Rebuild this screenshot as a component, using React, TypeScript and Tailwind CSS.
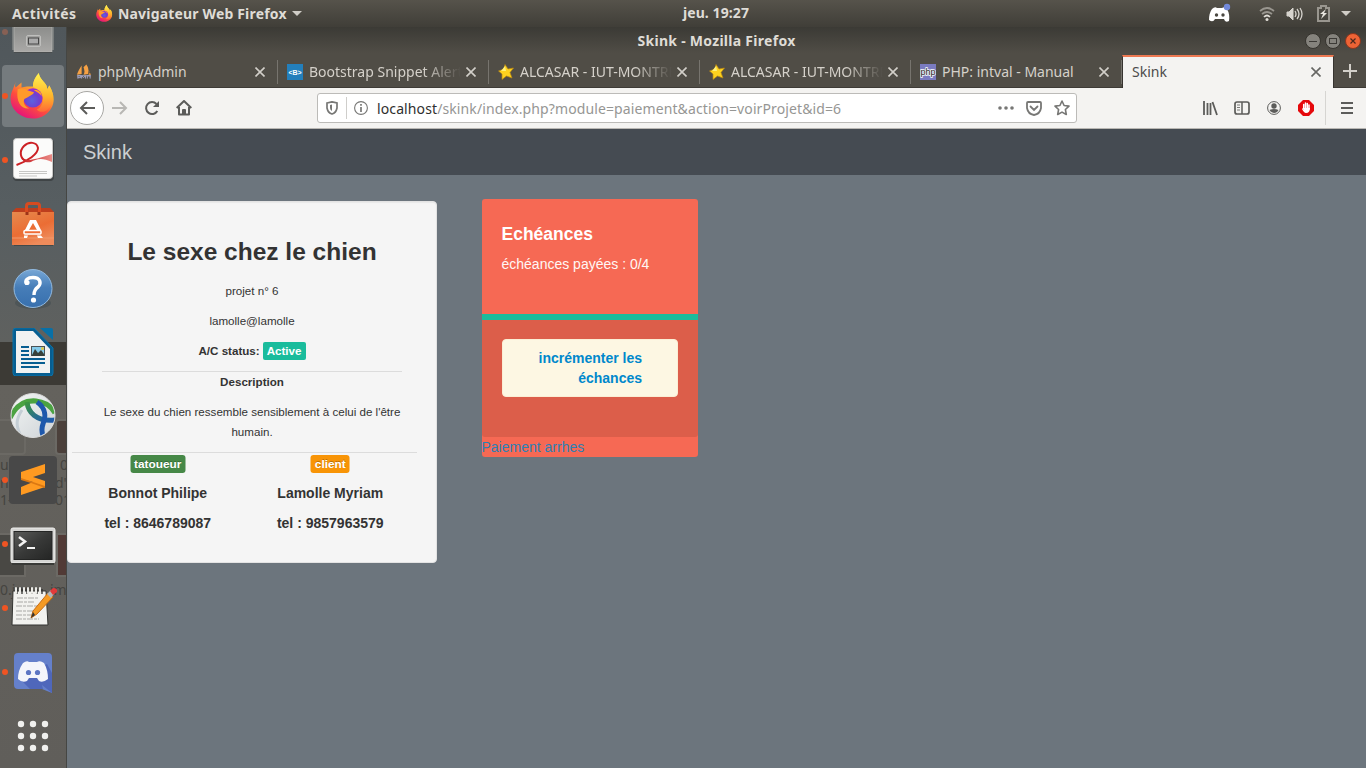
import React from 'react';
import type { ReactNode } from 'react';

const ui = "font-['Noto_Sans','Open_Sans',sans-serif]";

function FirefoxLogo({ size }: { size: number }) {
  return (
    <svg width={size} height={size} viewBox="0 0 48 48" className="shrink-0">
      <defs>
        <linearGradient id="ffBody" x1="0.85" y1="0.05" x2="0.3" y2="1">
          <stop offset="0" stopColor="#fff04a" />
          <stop offset="0.35" stopColor="#ffb02a" />
          <stop offset="0.65" stopColor="#ff4f3c" />
          <stop offset="1" stopColor="#e3127d" />
        </linearGradient>
        <radialGradient id="ffGlobe" cx="0.45" cy="0.65" r="0.65">
          <stop offset="0" stopColor="#5b62e0" />
          <stop offset="0.6" stopColor="#7040cf" />
          <stop offset="1" stopColor="#a32bd0" />
        </radialGradient>
        <linearGradient id="ffRight" x1="0" y1="0" x2="0" y2="1">
          <stop offset="0" stopColor="#fff451" />
          <stop offset="0.6" stopColor="#ffb52b" />
          <stop offset="1" stopColor="#ff6a37" />
        </linearGradient>
      </defs>
      <path d="M6 9 C5 12 5 14 6 15 L9 12.500 L12 10 L12 15 C15 14 20 14 24 14 C24 7 28 3 30 0 C31 6 35 8 38 13 L39 17 L41 13 C49 26 46 38 36 44 C27 50 13 48 6 40 C0 34 -1 25 3 17Z" fill="url(#ffBody)" />
      <path d="M24 14 C24 7 28 3 30 0 C31 6 35 8 38 13 L39 17 L41 13 C48 25 45 34 38 39 C35 41 30 41 28 38 C35 35 36 25 33 21 C31 17 26 16 24 14Z" fill="url(#ffRight)" />
      <circle cx="24" cy="26" r="10" fill="url(#ffGlobe)" />
      <path d="M8 17 C12 15 16 16 18 18 L25 20 C24 23 21 23 19 25 L15 27 C13 31 16 35 20 37 C12 38 6 31 8 17Z" fill="#ff9a2b" />
      <path d="M25 18 C29 17 33 20 33 24 C31 21 28 20 25 18Z" fill="#ff9c2e" />
    </svg>
  );
}

function FilesIcon() {
  return (
    <svg width="48" height="37" viewBox="0 0 48 37">
      <defs><linearGradient id="drawer" x1="0" y1="0" x2="0" y2="1"><stop stopColor="#8c8d8b" /><stop offset="1" stopColor="#aaa9a7" /></linearGradient></defs>
      <path d="M3 0H45V23H3Z" fill="#777b7b" />
      <path d="M5 0H43V25H5Z" fill="url(#drawer)" stroke="#c1c1bf" strokeWidth="0.500" />
      <rect x="17.500" y="8.500" width="14" height="11" rx="1.500" fill="#a1a19f" stroke="#bfbfbd" />
      <rect x="19.500" y="11" width="10" height="6" fill="#aaa" stroke="#464646" />
      <path d="M5 25.500H43" stroke="#494d4e" />
    </svg>
  );
}

function ReaderIcon() {
  return (
    <svg width="48" height="48" viewBox="0 0 48 48">
      <defs><linearGradient id="ribbon" x1="0" y1="0" x2="1" y2="0"><stop stopColor="#c71c20" /><stop offset="1" stopColor="#ea8c87" /></linearGradient></defs>
      <rect x="4" y="3" width="41" height="42" rx="4" fill="#3f4446" />
      <rect x="4.500" y="2.500" width="39" height="40" rx="3" fill="#fbfbfa" stroke="#c8c8c6" />
      <path d="M7.500 29C19 25 29 18 29 12C28 6 20 5 15 10C10 15 11 23 17 24.500" fill="none" stroke="#cc2024" strokeWidth="2" />
      <path d="M12 18C12 27 22 25 43 18V26C33 21 27 23 22 26C16 27 12 25 12 18Z" fill="url(#ribbon)" />
      <path d="M10 35.500H38M10 37.500H38M10 40H28" stroke="#c7c7c5" />
    </svg>
  );
}

function SoftwareIcon() {
  return (
    <svg width="48" height="48" viewBox="0 0 48 48">
      <defs><linearGradient id="bag" x1="0" y1="0" x2="0.500" y2="1"><stop stopColor="#e68a4e" /><stop offset="0.6" stopColor="#eb6d34" /><stop offset="1" stopColor="#ee8b5b" /></linearGradient></defs>
      <path d="M3 12 L7 8 H41 L45 12Z" fill="#bd3e1d" />
      <path d="M17.500 15V6Q17.500 3.500 20 3.500H28Q30.500 3.500 30.500 6V15" fill="none" stroke="#d84b20" strokeWidth="3" />
      <path d="M3 12H45V45H3Z" fill="url(#bag)" />
      <path d="M3 38H45" stroke="#f2996a" />
      <path d="M18 12V15M30 12V15" stroke="#9d3318" strokeWidth="3" />
      <path d="M21 20H27L32 30H28L24 23L20 30H16Z" fill="#fff" />
      <rect x="15" y="30.500" width="17" height="3.500" rx="1" fill="#ef6b35" stroke="#fff" strokeWidth="1.500" />
      <path d="M15 35.500H19L18 38H15ZM28 35.500H32L34 38H29Z" fill="#fff" />
      <path d="M5 45.500H44" stroke="#42494a" />
    </svg>
  );
}

function HelpIcon() {
  return (
    <svg width="48" height="48" viewBox="0 0 48 48">
      <defs><linearGradient id="help" x1="0" y1="0" x2="0" y2="1"><stop stopColor="#77a7d5" /><stop offset="0.48" stopColor="#467db8" /><stop offset="1" stopColor="#3870ae" /></linearGradient></defs>
      <ellipse cx="24" cy="39" rx="18" ry="6" fill="#4e5557" />
      <circle cx="24" cy="24.500" r="19" fill="url(#help)" stroke="#91b9df" />
      <path d="M18 20 C15 16 19 13.500 24 13.500 C31 13.500 33 19 29 23 C26 25 25 27 25 31" fill="none" stroke="#fff" strokeWidth="3.400" />
      <circle cx="18" cy="18.500" r="2.600" fill="#fff" /><circle cx="24.500" cy="36" r="2.600" fill="#fff" />
    </svg>
  );
}

function WriterIcon() {
  return (
    <svg width="48" height="48" viewBox="0 0 48 48">
      <path d="M7 0H25L44 20V45Q44 48 41 48H7Q4 48 4 45V3Q4 0 7 0Z" fill="#075e91" stroke="#0873aa" />
      <path d="M7 3H24L41 21V45H7Z" fill="#f1f2f2" />
      <path d="M31 0H42Q44 0 44 2V12Z" fill="#0870a7" />
      <path d="M12 19H20M12 23H20M12 27H20M12 31H36M12 35H36M12 39H30" stroke="#075e91" strokeWidth="2" />
      <rect x="22.500" y="18.500" width="13" height="9" fill="#85cbea" stroke="#4b5356" />
      <path d="M23 27L26 21L29 25L32 22L35 26V28H23Z" fill="#38413a" /><circle cx="33.500" cy="20.500" r="1.500" fill="#dfc844" />
    </svg>
  );
}

function SphereIcon() {
  return (
    <svg width="48" height="48" viewBox="0 0 48 48">
      <defs><linearGradient id="sphere" x1="0" y1="0" x2="1" y2="1"><stop stopColor="#f4f6f5" /><stop offset="1" stopColor="#ced3d7" /></linearGradient><linearGradient id="loop" x1="0" y1="0" x2="1" y2="1"><stop stopColor="#3d963e" /><stop offset="0.6" stopColor="#256b91" /><stop offset="1" stopColor="#1e58ac" /></linearGradient><clipPath id="orb"><circle cx="24" cy="23.500" r="21.500" /></clipPath></defs>
      <circle cx="24" cy="23.500" r="22" fill="url(#sphere)" stroke="#ddd" />
      <g clipPath="url(#orb)" fill="none">
        <path d="M1 26C7 13 16 8 27 9C36 10 42 14 46 21" stroke="#4ba342" strokeWidth="5" />
        <path d="M18 10C19 20 27 30 46 28" stroke="url(#loop)" strokeWidth="5" />
        <path d="M28 10C37 16 37 25 34 32C32 37 33 42 35 47" stroke="#1e58ac" strokeWidth="5" />
        <path d="M13 18C7 27 6 34 13 46" stroke="#c4ced5" strokeWidth="3" />
      </g>
    </svg>
  );
}

function SublimeIcon() {
  return (
    <svg width="48" height="48" viewBox="0 0 48 48">
      <rect width="48" height="48" rx="4" fill="#484848" />
      <path d="M12 16L36 8V17L24 21L36 25V31L12 39V31L24 26L12 23Z" fill="#ff9a21" />
      <path d="M12 22L36 30V32L22 27L12 24Z" fill="#dc7812" />
    </svg>
  );
}

function TerminalIcon() {
  return (
    <svg width="48" height="48" viewBox="0 0 48 48">
      <defs><linearGradient id="term" x1="0" y1="0" x2="1" y2="1"><stop stopColor="#5b5c5a" /><stop offset="0.5" stopColor="#383938" /><stop offset="1" stopColor="#242524" /></linearGradient></defs>
      <rect x="2" y="8" width="44" height="35" rx="2" fill="#d5d5d3" stroke="#eeeeec" />
      <rect x="5" y="11.500" width="38" height="28" fill="url(#term)" stroke="#242524" />
      <path d="M10 17L16 21.500L10 26" stroke="#f4f4f3" strokeWidth="2.500" fill="none" /><path d="M18 28H26" stroke="#f4f4f3" strokeWidth="2" />
      <path d="M3 44H45" stroke="#393a37" strokeWidth="2" />
    </svg>
  );
}

function NotesIcon() {
  return (
    <svg width="50" height="48" viewBox="0 0 50 48">
      <path d="M5 7H38L40 41H4Z" fill="#f2f2ef" stroke="#343532" />
      <path d="M9 5V10M14 5V10M19 5V10M24 5V10M29 5V10M34 5V10" stroke="#313230" strokeWidth="1.300" />
      <path d="M8 4V9M12 4V9M16 4V9M20 4V9M24 4V9M28 4V9M32 4V9" stroke="#ecece8" strokeWidth="2" strokeLinecap="round" />
      <path d="M9 14H31M9 18H26M8 22H29M8 27H29M8 31H25M8 35H31" stroke="#a8a8a5" strokeDasharray="6 1 3 1" />
      <path d="M23 34L25 27L40 9L45 13L29 30Z" fill="#f49a24" stroke="#c76b13" /><path d="M25 28L27 31L23 34Z" fill="#343432" />
      <path d="M39 10L43 14L46 10L43 6Z" fill="#b1b5b7" /><path d="M42 7L45 11L49 8Q50 4 45 4Z" fill="#e33a3a" />
    </svg>
  );
}

function DiscordIcon() {
  return (
    <svg width="48" height="48" viewBox="0 0 48 48">
      <path d="M9 5H39Q43 5 43 9V45L33 41H9Q5 41 5 37V9Q5 5 9 5Z" fill="#6580cb" />
      <path d="M11 31L21 41H34L33 37L43 45V25L38 16Z" fill="#4f67bb" />
      <path d="M14 15Q18 12 20 14H28Q31 12 35 15Q39 22 39 31Q34 35 30 33L28 30H20L18 33Q13 35 9 31Q9 22 14 15Z" fill="#f4f5fb" />
      <circle cx="19.500" cy="24.500" r="2.600" fill="#5c75c3" /><circle cx="28.500" cy="24.500" r="2.600" fill="#5c75c3" />
    </svg>
  );
}

function AppsIcon() {
  return <svg width="48" height="48" viewBox="0 0 48 48" fill="#f0f0ee">{[12, 24, 36].map((y) => [12, 24, 36].map((x) => <circle key={`${x}-${y}`} cx={x} cy={y} r="3.200" />))}</svg>;
}

function DockItem({ children, running, active }: { children: ReactNode; running?: boolean; active?: boolean }) {
  return (
    <div className={active ? 'relative flex h-16 w-[66px] shrink-0 items-center justify-center before:absolute before:left-[2px] before:top-[1px] before:h-[62px] before:w-[62px] before:rounded-[4px] before:bg-[#757b7e]' : 'relative flex h-16 w-[66px] shrink-0 items-center justify-center'}>
      {running && <span className="absolute left-[2px] top-[29px] z-10 size-[6px] rounded-full bg-[#ef5423]" />}
      <span className="relative z-10">{children}</span>
    </div>
  );
}

function Dock() {
  return (
    <aside className="relative flex w-[67px] shrink-0 flex-col overflow-hidden border-r border-[#454643] bg-[linear-gradient(#50575b_0px,#575e61_180px,#5f615f_315px,#3c3a35_315px,#3c3a35_358px,#64625d_358px,#605e5a_741px)]">
      <div className={`absolute inset-0 text-[14px] leading-5 text-[#454440] ${ui}`}>
        <span className="absolute left-[-28px] top-[392px] h-9 w-[54px] rounded-sm border-2 border-[#6b6964] bg-[#62605b]" />
        <span className="absolute left-[55px] top-[392px] h-9 w-4 rounded-sm border-2 border-[#6b6964] bg-[#4b403b]" />
        <span className="absolute left-0 top-[428px]">u</span><span className="absolute left-[60px] top-[428px]">0</span>
        <span className="absolute left-0 top-[446px]">n</span><span className="absolute left-[55px] top-[446px]">d'</span>
        <span className="absolute left-0 top-[463px]">1-</span><span className="absolute left-[55px] top-[463px]">01</span>
        <span className="absolute left-[-28px] top-[506px] h-[44px] w-[54px] border-2 border-[#6b6964] bg-[#494844]" />
        <span className="absolute left-[56px] top-[506px] h-[44px] w-4 border-2 border-[#6b6964] bg-[#513a36]" />
        <span className="absolute left-0 top-[553px] whitespace-nowrap">0.jpg</span><span className="absolute left-[50px] top-[553px]">im</span>
      </div>
      <div className="relative flex h-[37px] shrink-0 items-start justify-center"><span className="absolute left-[2px] top-[2px] size-[6px] rounded-full bg-[#876054]" /><FilesIcon /></div>
      <DockItem running active><FirefoxLogo size={46} /></DockItem>
      <DockItem running><ReaderIcon /></DockItem>
      <DockItem><SoftwareIcon /></DockItem>
      <DockItem><HelpIcon /></DockItem>
      <DockItem><WriterIcon /></DockItem>
      <DockItem><SphereIcon /></DockItem>
      <DockItem running><SublimeIcon /></DockItem>
      <DockItem running><TerminalIcon /></DockItem>
      <DockItem running><NotesIcon /></DockItem>
      <DockItem running><DiscordIcon /></DockItem>
      <DockItem><AppsIcon /></DockItem>
    </aside>
  );
}

function DesktopBar() {
  return (
    <header className={`grid h-[27px] shrink-0 grid-cols-[1fr_auto_1fr] items-center bg-linear-to-b from-[#56534b] to-[#403e38] text-[14px] font-bold leading-[26px] text-[#dfdcd6] ${ui}`}>
      <div className="flex items-center pl-3"><span className="w-[84px] tracking-[0.400px]">Activités</span><FirefoxLogo size={17} /><span className="ml-[5px] w-[170px] whitespace-nowrap tracking-[0.170px]">Navigateur Web Firefox</span><svg width="10" height="6" className="ml-[4px]"><path d="M0 0H10L5 5Z" fill="#d0cdc7" /></svg></div>
      <span className="pl-[68px] tracking-[0.100px] -translate-x-px -translate-y-px">jeu. 19:27</span>
      <div className="flex items-center justify-end pr-[15px]">
        <svg width="23" height="21" viewBox="0 0 23 21" className="mr-[28px]"><path d="M4 6Q7 3 9 5H14Q17 3 19 6Q22 11 21 18Q17 20 16 16H7Q5 20 1 17Q1 10 4 6Z" fill="#fff" /><circle cx="8.500" cy="12" r="1.700" fill="#494740" /><circle cx="15" cy="12" r="1.700" fill="#494740" /><circle cx="19" cy="4" r="3.200" fill="#7289da" /></svg>
        <svg width="16" height="16" viewBox="0 0 16 16" fill="none" className="mr-[11px]"><path d="M1 5Q8-1 15 5M3 8Q8 4 13 8" stroke="#99968f" strokeWidth="1.700" /><path d="M5 11Q8 8 11 11" stroke="#e0ddd7" strokeWidth="1.700" /><circle cx="8" cy="13.500" r="1.500" fill="#e0ddd7" /></svg>
        <svg width="17" height="16" viewBox="0 0 17 16" fill="none" stroke="#d6d3cd" className="mr-[14px]"><path d="M1 6H3L7 2V14L3 10H1Z" fill="#d6d3cd" /><path d="M9 5Q11 8 9 11M11 3Q15 8 11 13M14 2Q18 8 14 14" strokeWidth="1.300" /></svg>
        <svg width="13" height="17" viewBox="0 0 13 17" fill="none" className="mr-[11px]"><path d="M1 3H4V1H9V3H12V16H1Z" stroke="#99968f" strokeWidth="2" /><path d="M9 4L3 9H6L4 14L10 8H7Z" fill="#e7e4dd" /></svg>
        <svg width="10" height="6"><path d="M0 0H10L5 5Z" fill="#d0cdc7" /></svg>
      </div>
    </header>
  );
}

const CloseX = ({ dark = false }: { dark?: boolean }) => <svg width="10" height="10" viewBox="0 0 10 10" className="shrink-0"><path d="M.5.5L9.500 9.500M9.500.5L.5 9.500" stroke={dark ? '#666663' : '#d2cfc9'} strokeWidth="1.600" /></svg>;
const Star = () => <svg width="16" height="16" viewBox="0 0 16 16"><path d="M7 .5L10 5L15.500 4L12 8.500L14 14L8.500 12L4 15.500V10L.5 7L6 5Z" fill="#fed21f" stroke="#b88712" strokeWidth=".7" /><path d="M7 2L8 7L3 7Z" fill="#fff07a" /></svg>;
const Snippet = () => <svg width="16" height="16" viewBox="0 0 16 16"><rect width="16" height="16" fill="#237fbc" /><text x="8" y="10.500" textAnchor="middle" className="font-['Liberation_Sans',sans-serif] text-[7px] font-bold" fill="white">&lt;B&gt;</text></svg>;
const Php = () => <svg width="16" height="16" viewBox="0 0 16 16"><rect width="16" height="16" fill="#7a7bc0" /><text x="8" y="10.500" textAnchor="middle" className="font-['Liberation_Sans',sans-serif] text-[9px]" fill="#191921" stroke="white" strokeWidth="1.500" paintOrder="stroke">php</text></svg>;
const Sails = () => <svg width="16" height="16" viewBox="0 0 17 16"><path d="M6 1Q2 7 1 11L6 10ZM8 3Q10 8 8 11L13 10Q14 4 11 0ZM13 6Q16 9 13 11H16Z" fill="#f6a144" /><path d="M1 12H16M2 15V12H5V14H2M6 12V15M6 12L8 14L10 12V15M12 15V12H15V15" fill="none" stroke="#a8a9c9" strokeWidth="1" /></svg>;

function Tab({ icon, title, clipped }: { icon: ReactNode; title: string; clipped?: boolean }) {
  return <div className="relative flex w-[211px] shrink-0 items-center pl-[9px] pr-[13px] pt-px text-[#d5d1ca] after:absolute after:right-0 after:top-[5px] after:h-6 after:w-px after:bg-[#77746e]">{icon}<span className={clipped ? 'ml-[6px] min-w-0 flex-1 overflow-hidden whitespace-nowrap mask-r-from-75% mask-r-to-100%' : 'ml-[6px] flex-1 whitespace-nowrap'}>{title}</span><span className="ml-[5px]"><CloseX /></span></div>;
}

function WindowBar() {
  return (
    <div className={`h-[61px] shrink-0 bg-[linear-gradient(#3b3a35,#504d46_26px,#504d46)] ${ui}`}>
      <div className="grid h-7 grid-cols-[1fr_auto_1fr] items-center text-[14px] font-bold text-[#dfdcd6]">
        <span /><span className="-translate-y-px tracking-[0.280px]">Skink - Mozilla Firefox</span>
        <div className="flex justify-end gap-1 pr-[5px]">
          <svg width="16" height="16" viewBox="0 0 16 16"><circle cx="8" cy="8" r="7.500" fill="#85837d" stroke="#35332e" /><path d="M4 8.500H12" stroke="#3c3a36" /></svg>
          <svg width="16" height="16" viewBox="0 0 16 16"><circle cx="8" cy="8" r="7.500" fill="#85837d" stroke="#35332e" /><rect x="4.500" y="5.500" width="7" height="5" fill="none" stroke="#3c3a36" /></svg>
          <svg width="16" height="16" viewBox="0 0 16 16"><circle cx="8" cy="8" r="7.500" fill="#ee6335" stroke="#8b361e" /><path d="M5.500 5.500L10.500 10.500M10.500 5.500L5.500 10.500" stroke="#4d281d" strokeWidth="1.200" /></svg>
        </div>
      </div>
      <div className="flex h-[33px] border-b border-[#3e3b36] text-[14px] leading-8">
        <Tab icon={<Sails />} title="phpMyAdmin" />
        <Tab icon={<Snippet />} title="Bootstrap Snippet Alert" clipped />
        <Tab icon={<Star />} title="ALCASAR - IUT-MONTREUIL" clipped />
        <Tab icon={<Star />} title="ALCASAR - IUT-MONTREUIL" clipped />
        <Tab icon={<Php />} title="PHP: intval - Manual" />
        <div className="flex h-[33px] w-[212px] shrink-0 items-center border-x border-t-2 border-x-[#36332f] border-t-[#ee7952] bg-[#f4f3f1] pb-px pl-[9px] pr-[12px] text-[#4c4c4a]"><span className="flex-1">Skink</span><CloseX dark /></div>
        <div className="flex flex-1 items-center justify-center"><svg width="14" height="14"><path d="M7 0V14M0 7H14" stroke="#d2cfc9" strokeWidth="2" /></svg></div>
      </div>
    </div>
  );
}

function Toolbar() {
  return (
    <div className={`flex h-[41px] shrink-0 items-center border-b border-[#b9b7b3] bg-[#f4f3f1] pl-[3px] text-[#5c5c5a] ${ui}`}>
      <div className="flex w-[247px] shrink-0 items-center">
        <div className="flex size-[34px] items-center justify-center rounded-full border border-[#a8a7a4] bg-white"><svg width="16" height="14" viewBox="0 0 16 14" fill="none"><path d="M8 1L2 7L8 13M2 7H16" stroke="currentColor" strokeWidth="2" /></svg></div>
        <svg width="16" height="14" viewBox="0 0 16 14" fill="none" className="ml-2"><path d="M8 1L14 7L8 13M14 7H0" stroke="#b8b7b4" strokeWidth="2" /></svg>
        <svg width="16" height="16" viewBox="0 0 16 16" fill="none" className="ml-4"><path d="M13.300 11A6 6 0 1 1 12.500 4" stroke="currentColor" strokeWidth="2" /><path d="M15 1V7H9Z" fill="currentColor" /></svg>
        <svg width="16" height="16" viewBox="0 0 16 16" fill="none" className="ml-4"><path d="M.7 8L8 1L15.300 8M3 7V14.500H13V7" stroke="currentColor" strokeWidth="2" strokeLinejoin="round" /><path d="M6 15V10Q6 9 7 9H9Q10 9 10 10V15Z" fill="currentColor" /></svg>
      </div>
      <div className="flex h-[30px] w-[760px] shrink-0 items-center rounded-[3px] border border-[#bcbbb8] bg-white pl-[8px] pr-[6px] text-[14px]">
        <svg width="12" height="14" viewBox="0 0 12 14"><path d="M1 2L6 .8L11 2V7Q10 12 6 13Q2 12 1 7Z" fill="none" stroke="#777775" strokeWidth="1.700" /><path d="M6 3.500L4 4V7Q4 9 6 10Z" fill="#777775" /></svg>
        <span className="ml-[8px] h-[22px] w-px bg-[#cfcecb]" />
        <svg width="14" height="14" viewBox="0 0 14 14" className="ml-[7px]"><circle cx="7" cy="7" r="6.400" fill="none" stroke="#777775" strokeWidth="1.100" /><path d="M7 6V11M7 3V4.700" stroke="#777775" strokeWidth="1.700" /></svg>
        <span className="ml-[9px] flex-1 whitespace-nowrap tracking-[0.110px] text-[#969694]"><span className="text-[#2f2f2e]">localhost</span>/skink/index.php?module=paiement&amp;action=voirProjet&amp;id=6</span>
        <svg width="16" height="4" fill="#777775"><circle cx="2" cy="2" r="1.800" /><circle cx="8" cy="2" r="1.800" /><circle cx="14" cy="2" r="1.800" /></svg>
        <svg width="16" height="15" viewBox="0 0 16 15" fill="none" stroke="#777775" strokeWidth="1.800" className="ml-3"><path d="M2 1H14Q15 1 15 2V7Q14 13 8 14Q2 13 1 7V2Q1 1 2 1Z" /><path d="M4.500 5.500L8 9L11.500 5.500" strokeLinecap="round" /></svg>
        <svg width="16" height="16" viewBox="0 0 16 16" fill="none" stroke="#777775" strokeWidth="1.600" strokeLinejoin="round" className="ml-3"><path d="M8 1L10.100 5.500L15 6.100L11.400 9.500L12.300 14.500L8 12.100L3.700 14.500L4.600 9.500L1 6.100L5.900 5.500Z" /></svg>
      </div>
      <div className="flex flex-1 items-center justify-end self-stretch">
        <svg width="16" height="16" viewBox="0 0 16 16" stroke="currentColor" strokeWidth="1.800"><path d="M2 1V15M5.500 3V15M8.500 3V15M10.500 2L15 15" /></svg>
        <svg width="16" height="14" viewBox="0 0 16 14" fill="none" stroke="currentColor" className="ml-[16px]"><rect x="1" y="1" width="14" height="12" rx="2" strokeWidth="1.700" /><path d="M8 1V13" strokeWidth="1.500" /><path d="M3 4H6M3 6.500H6M3 9H6" strokeWidth="0.800" /></svg>
        <svg width="14" height="14" viewBox="0 0 14 14" className="ml-[17px]"><circle cx="7" cy="7" r="6.400" fill="none" stroke="currentColor" /><circle cx="7" cy="5" r="2.700" fill="currentColor" /><path d="M2.500 9Q7 7 11.500 9Q10 12 7 12Q4 12 2.500 9Z" fill="currentColor" /></svg>
        <svg width="16" height="16" viewBox="0 0 16 16" className="ml-[17px]"><path d="M5 0H11L16 5V11L11 16H5L0 11V5Z" fill="#e5090c" /><path d="M5.700 9V4.500M7.500 8V3M9.300 8V3.500M11 9V5" stroke="white" strokeWidth="1.500" strokeLinecap="round" /><path d="M4 8L6 10L5.500 8H12Q12 13 8 13Q6 13 4 9Z" fill="white" /></svg>
        <span className="ml-[11px] h-[34px] w-px bg-[#d6d5d2]" />
        <svg width="12" height="12" viewBox="0 0 12 12" stroke="currentColor" strokeWidth="2" className="ml-[15px] mr-[13px]"><path d="M0 1H12M0 6H12M0 11H12" /></svg>
      </div>
    </div>
  );
}

function Contact({ label, green, name, phone }: { label: string; green?: boolean; name: string; phone: string }) {
  return (
    <div className="flex-1 text-center text-[14px] font-bold leading-5">
      <div className="flex h-5 justify-center pt-[2px]"><span className={green ? 'h-[18px] rounded-[3px] bg-[#468847] px-1 text-[11.844px] leading-[18px] text-white [text-shadow:0_-1px_0_rgba(0,0,0,.25)]' : 'h-[18px] rounded-[3px] bg-[#f89406] px-1 text-[11.844px] leading-[18px] text-white [text-shadow:0_-1px_0_rgba(0,0,0,.25)]'}>{label}</span></div>
      <p className="mt-[10px]">{name}</p><p className="mt-[10px]">{phone}</p>
    </div>
  );
}

function ProjectCard() {
  return (
    <section className="h-[362px] w-[370px] shrink-0 rounded-[4px] border border-[#e3e3e3] bg-[#f5f5f5] pl-[4px] pr-[19px] pt-[30px] text-center text-[11.6px] leading-5 text-[#333] shadow-[inset_0_1px_1px_rgba(0,0,0,.05)]">
      <div className="mx-[15px] pl-[15px]">
        <h1 className="text-[24.5px] font-bold leading-10">Le sexe chez le chien</h1>
        <p className="mt-[9px]">projet n° 6</p>
        <p className="mt-[10px]">lamolle@lamolle</p>
        <p className="mt-[10px] flex items-center justify-center gap-[3px] font-bold"><span>A/C status:</span><span className="h-[18px] rounded-[2px] bg-[#1abc9c] px-[4px] leading-[18px] text-white">Active</span></p>
        <div className="mt-[10px] h-px bg-[#dcdcdc]" />
        <p className="font-bold">Description</p>
        <p className="-mx-[3px] mt-[10px]">Le sexe du chien ressemble sensiblement à celui de l'être<br />humain.</p>
      </div>
      <div className="mt-[10px] h-px bg-[#dcdcdc]" />
      <div className="flex -translate-x-[0.500px]"><Contact green label="tatoueur" name="Bonnot Philipe" phone="tel : 8646789087" /><Contact label="client" name="Lamolle Myriam" phone="tel : 9857963579" /></div>
    </section>
  );
}

function PaymentCard() {
  return (
    <section className="-mt-[2px] ml-[45px] h-[258px] w-[216px] shrink-0 overflow-hidden rounded-[3px] bg-[#f66954] text-[14px] leading-5">
      <div className="h-[115px] px-[19.500px] pt-[25px] text-[#fff7f5]"><h2 className="text-[17.5px] font-bold leading-5 text-white">Echéances</h2><p className="mt-[10px]">échéances payées : 0/4</p></div>
      <div className="h-[6px] bg-[#1abc9c]" />
      <div className="h-[117px] rounded-b-[3px] bg-[#dc5e4a] px-5 pt-[19px]"><div className="rounded-[4px] border border-[#fbeed5] bg-[#fdf7e3] py-2 pl-[14px] pr-[35px] text-right font-bold text-[#0088cc]">incrémenter les<br />échances</div></div>
      <a className="-ml-[0.500px] block text-[#2c80b4]">Paiement arrhes</a>
    </section>
  );
}

export default function App() {
  return (
    <div className="flex h-[768px] w-[1366px] flex-col overflow-hidden font-['Liberation_Sans',Arial,sans-serif]">
      <DesktopBar />
      <div className="flex min-h-0 flex-1">
        <Dock />
        <main className="flex min-w-0 flex-1 flex-col bg-[#6c757d]">
          <WindowBar />
          <Toolbar />
          <nav className="flex h-[46px] shrink-0 items-center bg-[#454b52] px-4 text-xl text-[#cccfd1]">Skink</nav>
          <div className="flex items-start pt-[26px]"><ProjectCard /><PaymentCard /></div>
        </main>
      </div>
    </div>
  );
}
